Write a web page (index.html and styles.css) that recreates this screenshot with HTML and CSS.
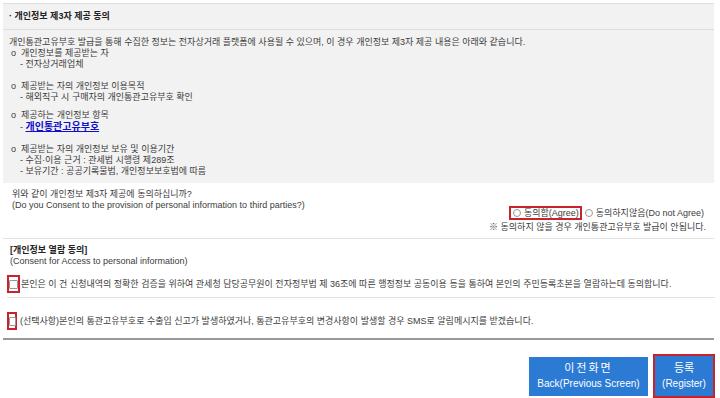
FILE: index.html
```html
<!DOCTYPE html>
<html lang="ko">
<head>
<meta charset="utf-8">
<link rel="stylesheet" href="styles.css">
</head>
<body>
<div class="wrap">
  <div class="head">· 개인정보 제3자 제공 동의</div>
  <div class="info">
    <div class="intro">개인통관고유부호 발급을 통해 수집한 정보는 전자상거래 플랫폼에 사용될 수 있으며, 이 경우 개인정보 제3자 제공 내용은 아래와 같습니다.</div>
    <div class="grp">
      <div class="item">o&nbsp; 개인정보를 제공받는 자</div>
      <div class="sub">- 전자상거래업체</div>
    </div>
    <div class="grp g2">
      <div class="item">o&nbsp; 제공받는 자의 개인정보 이용목적</div>
      <div class="sub">- 해외직구 시 구매자의 개인통관고유부호 확인</div>
    </div>
    <div class="grp g3">
      <div class="item">o&nbsp; 제공하는 개인정보 항목</div>
      <div class="sub linkline">- <a class="link" href="#">개인통관고유부호</a></div>
    </div>
    <div class="grp g4">
      <div class="item">o&nbsp; 제공받는 자의 개인정보 보유 및 이용기간</div>
      <div class="sub">- 수집·이용 근거 : 관세법 시행령 제289조</div>
      <div class="sub">- 보유기간 : 공공기록물법, 개인정보보호법에 따름</div>
    </div>
  </div>
  <div class="consent">
    <div class="question">
      <div>위와 같이 개인정보 제3자 제공에 동의하십니까?</div>
      <div>(Do you Consent to the provision of personal information to third parties?)</div>
    </div>
    <div class="choices">
      <div class="radios">
        <label class="radio hl"><span class="rb"></span>동의함(Agree)</label>
        <label class="radio"><span class="rb"></span>동의하지않음(Do not Agree)</label>
      </div>
      <div class="note">※ 동의하지 않을 경우 개인통관고유부호 발급이 안됩니다.</div>
    </div>
  </div>
  <div class="access">
    <div class="title">[개인정보 열람 동의]</div>
    <div class="sub-en">(Consent for Access to personal information)</div>
    <div class="row r1"><span class="cbwrap"><span class="cb"></span></span>본인은 이 건 신청내역의 정확한 검증을 위하여 관세청 담당공무원이 전자정부법 제 36조에 따른 행정정보 공동이용 등을 통하여 본인의 주민등록초본을 열람하는데 동의합니다.</div>
    <div class="row r2"><span class="cbwrap narrow"><span class="cb"></span></span>(선택사항)본인의 통관고유부호로 수출입 신고가 발생하였거나, 통관고유부호의 변경사항이 발생할 경우 SMS로 알림메시지를 받겠습니다.</div>
  </div>
  <div class="btns">
    <button class="btn back"><span class="ko wide">이전화면</span><span>Back(Previous Screen)</span></button>
    <span class="btnhl"><button class="btn reg"><span class="ko">등록</span><span>(Register)</span></button></span>
  </div>
</div>
</body>
</html>
```
FILE: styles.css
```css
body {
  margin: 0;
  background: #fff;
  font-family: "Liberation Sans", "Noto Sans CJK KR", sans-serif;
  font-size: 9px;
  color: #3c3c3c;
}

.wrap {
  margin: 3px 0 0 3px;
  width: 711px;
}

.head {
  background: #f2f2f2;
  border-top: 1px solid #dedede;
  border-bottom: 1px solid #dedede;
  height: 25px;
  line-height: 25px;
  padding-left: 6px;
  font-weight: bold;
  color: #222;
}

.info {
  background: #f2f2f2;
  padding: 7px 7px 6px 6px;
  line-height: 11px;
}

.item {
  padding-left: 2px;
}

.sub {
  padding-left: 11px;
}

.g2 { margin-top: 11px; }
.g3 { margin-top: 7px; }
.g4 { margin-top: 11px; }

.linkline {
  line-height: 12px;
}

.link {
  color: #1010c8;
  font-weight: bold;
  font-size: 10px;
  text-decoration: underline;
}

.consent {
  display: flex;
  flex-direction: column;
  padding: 6px 8px 5px 9px;
  border-bottom: 1px solid #e2e2e2;
  line-height: 11px;
}

.choices {
  align-self: flex-end;
  margin-top: -5px;
  display: flex;
  flex-direction: column;
  align-items: flex-end;
}

.radios {
  display: flex;
  align-items: center;
  height: 14px;
}

.radio {
  display: flex;
  align-items: center;
  height: 14px;
  padding: 0 2px;
  margin-left: 1px;
}

.radio.hl {
  border: 2px solid #c8222a;
  height: 10px;
  padding: 0 1px 0 2px;
}

.rb {
  width: 6px;
  height: 6px;
  border: 1px solid #9a9a9a;
  border-radius: 50%;
  background: #fff;
  margin-right: 3px;
}

.note {
  line-height: 12px;
  margin-top: 1px;
}

.access {
  padding: 6px 0 5px 4px;
  line-height: 11px;
  border-bottom: 2px solid #999;
}

.title {
  font-weight: bold;
  color: #222;
  padding-left: 3px;
}

.sub-en {
  padding-left: 3px;
}

.row {
  display: flex;
  align-items: center;
  line-height: 13px;
}

.r1 {
  padding: 8px 0 4px;
  border-bottom: 1px solid #e2e2e2;
  margin-right: -1px;
}

.r2 {
  padding: 14px 0 3px;
}

.cbwrap {
  display: flex;
  align-items: center;
  justify-content: center;
  width: 9px;
  height: 14px;
  border: 2px solid #c8222a;
  margin-right: 1px;
}

.cbwrap.narrow {
  width: 6px;
  margin-right: 3px;
}

.cb {
  width: 7px;
  height: 7px;
  border: 1px solid #999;
  border-radius: 1px;
  background: #fff;
  flex: none;
}

.narrow .cb {
  width: 5px;
}

.btns {
  display: flex;
  justify-content: flex-end;
  align-items: center;
  gap: 5px;
  padding-top: 14px;
  margin-right: -1px;
}

.btn {
  display: flex;
  flex-direction: column;
  align-items: center;
  justify-content: center;
  border: none;
  background: #2b7ad3;
  color: #fff;
  font-family: "Liberation Sans", "Noto Sans CJK KR", sans-serif;
  font-size: 10px;
  line-height: 16px;
  padding: 0;
  margin: 0;
}

.back {
  width: 119px;
  height: 39px;
}

.btnhl {
  display: block;
  border: 2px solid #c8222a;
}

.reg {
  width: 58px;
  height: 40px;
}

.ko {
  font-size: 11px;
}

.ko.wide {
  letter-spacing: 2px;
}
```
